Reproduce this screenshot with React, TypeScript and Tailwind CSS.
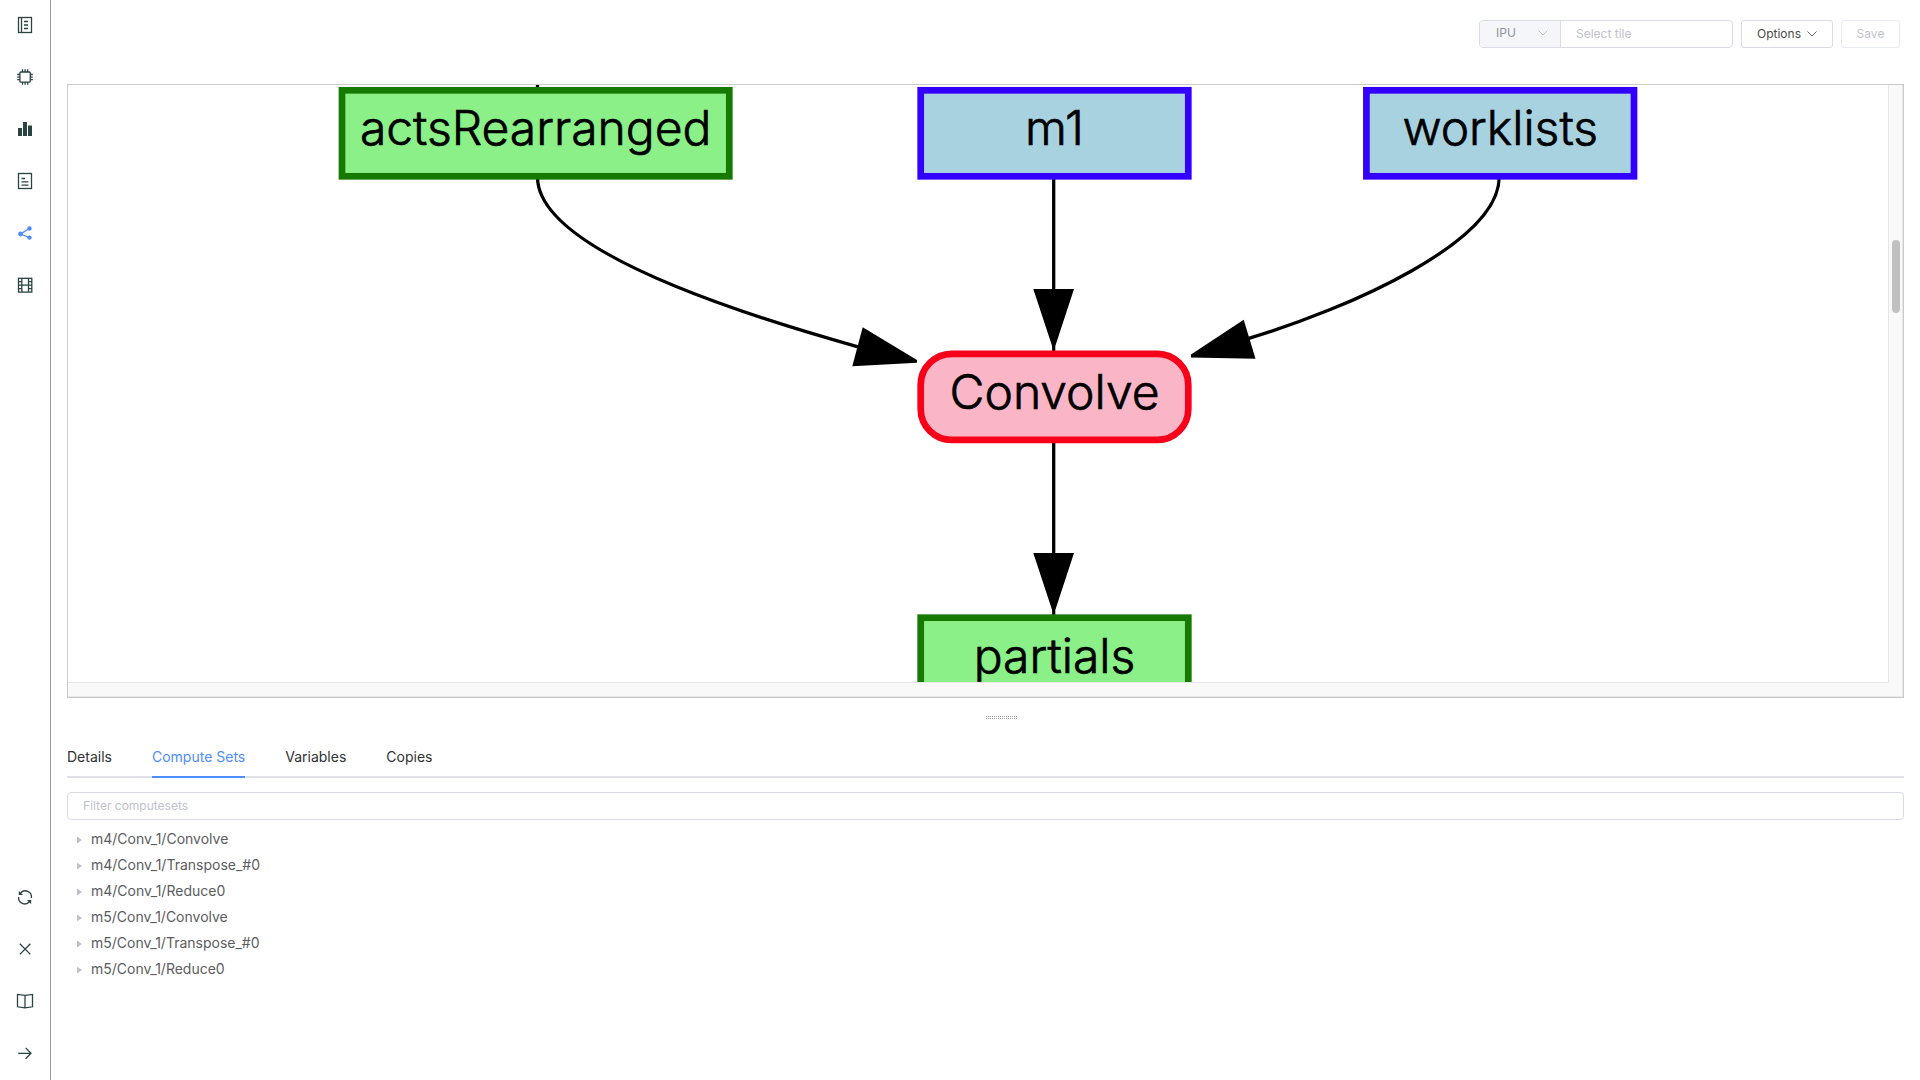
import type { ReactNode } from "react";

function Icon({ children }: { children: ReactNode }) {
  return (
    <svg
      width="20"
      height="20"
      viewBox="0 0 20 20"
      fill="none"
      stroke="currentColor"
      strokeWidth="1.3"
      aria-hidden="true"
    >
      {children}
    </svg>
  );
}

const topNav: { label: string; active?: boolean; icon: ReactNode }[] = [
  {
    label: "Summary",
    icon: (
      <Icon>
        <rect x="3.5" y="2.5" width="13" height="15" />
        <path d="M6.5 2.5v15M9 6.5h4M9 10h4M9 13.5h4" />
      </Icon>
    ),
  },
  {
    label: "Memory",
    icon: (
      <Icon>
        <rect x="4.9" y="5" width="10.4" height="10.2" rx="1" />
        <path d="M7.5 5V2.2M10.1 5V2.2M12.7 5V2.2M7.5 15v2.8M10.1 15v2.8M12.7 15v2.8M5 7.5H2.2M5 10.1H2.2M5 12.7H2.2M15 7.5h2.8M15 10.1h2.8M15 12.7h2.8" />
      </Icon>
    ),
  },
  {
    label: "Liveness",
    icon: (
      <Icon>
        <path d="M3 9h4v8H3zM8 3h4v14H8zM13 6.5h4V17h-4z" fill="currentColor" stroke="none" />
      </Icon>
    ),
  },
  {
    label: "Program tree",
    icon: (
      <Icon>
        <rect x="3.5" y="2.5" width="13" height="15" />
        <path d="M6.5 7.5H10M6.5 10.8h7M6.5 14.2h7" />
      </Icon>
    ),
  },
  {
    label: "Operations",
    active: true,
    icon: (
      <Icon>
        <path d="M14.5 5.5L5.5 11l9 3.7" />
        <circle cx="14.5" cy="5.5" r="2.2" fill="currentColor" stroke="none" />
        <circle cx="5.5" cy="11" r="2.4" fill="currentColor" stroke="none" />
        <circle cx="14.5" cy="14.6" r="2.2" fill="currentColor" stroke="none" />
      </Icon>
    ),
  },
  {
    label: "Execution trace",
    icon: (
      <Icon>
        <rect x="3.5" y="3.3" width="13.3" height="13.8" />
        <path d="M6.8 3v14M13.5 3v14M3.5 6.6h3.3M3.5 10.2h13.3M3.5 13.7h3.3M13.5 6.6h3.3M13.5 13.7h3.3" />
      </Icon>
    ),
  },
];

const bottomNav: { label: string; icon: ReactNode }[] = [
  {
    label: "Reload",
    icon: (
      <Icon>
        <path d="M5.6 6A6.2 6.2 0 0 1 16.4 11M14.4 14.8A6.2 6.2 0 0 1 3.6 10" />
        <path d="M3.8 3.9V8h4.3zM16.2 17.1V13h-4.3z" fill="currentColor" stroke="none" />
      </Icon>
    ),
  },
  {
    label: "Close",
    icon: (
      <Icon>
        <path d="M4.8 4.8l10.6 10.6M15.4 4.8L4.8 15.4" />
      </Icon>
    ),
  },
  {
    label: "Documentation",
    icon: (
      <Icon>
        <path d="M10 4.4L2.5 3.4v12.4l7.5 1 7.5-1V3.4zM10 4.4v12.4" />
      </Icon>
    ),
  },
  {
    label: "Expand",
    icon: (
      <Icon>
        <path d="M3.2 10.3h12.6M10.6 4.9l5.4 5.4-5.4 5.4" />
      </Icon>
    ),
  },
];

function NavButton({ label, icon, active }: { label: string; icon: ReactNode; active?: boolean }) {
  return (
    <button
      type="button"
      aria-label={label}
      className={`flex h-[52px] w-full items-center justify-center pb-[2px] ${active ? "text-[#4e8cff]" : "text-[#2a4441]"}`}
    >
      {icon}
    </button>
  );
}

function Chevron({ className }: { className: string }) {
  return (
    <svg width="10" height="6" viewBox="0 0 10 6" fill="none" stroke="currentColor" className={className} aria-hidden="true">
      <path d="M0.5 0.5L5 5l4.5-4.5" />
    </svg>
  );
}

interface GraphNode {
  label: string;
  x: number;
  y: number;
  width: number;
  radius?: number;
  fill: string;
  stroke: string;
}

const green = { fill: "#8bf088", stroke: "#167a00" };
const blue = { fill: "#a9d2e1", stroke: "#3300ff" };
const pink = { fill: "#fab6c6", stroke: "#f80019" };

const nodes: GraphNode[] = [
  { label: "actsRearranged", x: 342, y: 90.3, width: 387.3, ...green },
  { label: "m1", x: 920.7, y: 90.3, width: 267.6, ...blue },
  { label: "worklists", x: 1366.4, y: 90.3, width: 267.6, ...blue },
  { label: "Convolve", x: 920.7, y: 353.9, width: 267.6, radius: 31, ...pink },
  { label: "partials", x: 920.7, y: 617.7, width: 267.6, ...green },
];

function Graph() {
  return (
    <svg
      width="1820"
      height="597"
      viewBox="68 85 1820 597"
      className="block shrink-0"
      role="img"
      aria-label="Compute graph"
    >
      <g fill="none" stroke="#000" strokeWidth="3.3">
        <path d="M537.5 80v10" />
        <path d="M537.5 177C537.5 250 739 313.5 858 346.8" />
        <path d="M1053.7 177v113" />
        <path d="M1499.2 177C1499.2 242 1350 308 1248 338.6" />
        <path d="M1053.7 441v113" />
      </g>
      <g fill="#000">
        <path d="M862.7 327.3L852.3 366.3L917 362.8V360z" />
        <path d="M1033.3 289h40.7L1055.3 346v6h-3.2v-6z" />
        <path d="M1243.7 319.8L1255.5 358.7L1191 357.5V354.5z" />
        <path d="M1033.3 553h40.7L1055.3 610v6h-3.2v-6z" />
      </g>
      {nodes.map((n) => (
        <g key={n.label}>
          <rect
            x={n.x}
            y={n.y}
            width={n.width}
            height="86"
            rx={n.radius ?? 0}
            fill={n.fill}
            stroke={n.stroke}
            strokeWidth="6.7"
          />
          <text
            x={n.x + n.width / 2}
            y={n.y + 55}
            textAnchor="middle"
            stroke="#000"
            strokeWidth="0.7"
            className="fill-black text-[48px] font-light"
          >
            {n.label}
          </text>
        </g>
      ))}
    </svg>
  );
}

const tabs = ["Details", "Compute Sets", "Variables", "Copies"];

const computeSets = [
  "m4/Conv_1/Convolve",
  "m4/Conv_1/Transpose_#0",
  "m4/Conv_1/Reduce0",
  "m5/Conv_1/Convolve",
  "m5/Conv_1/Transpose_#0",
  "m5/Conv_1/Reduce0",
];

export default function App() {
  return (
    <div className="flex min-h-screen bg-white font-['Inter',sans-serif]">
      <nav className="flex w-[51px] shrink-0 flex-col justify-between border-r border-[#999999]">
        <div>
          {topNav.map((item) => (
            <NavButton key={item.label} {...item} />
          ))}
        </div>
        <div>
          {bottomNav.map((item) => (
            <NavButton key={item.label} {...item} />
          ))}
        </div>
      </nav>

      <main className="flex min-w-0 flex-1 flex-col px-4">
        <header className="flex h-[84px] items-start justify-end gap-2 pt-5 pr-1 text-xs">
          <div className="flex h-7 w-[254px] overflow-hidden rounded border border-[#d8dae4]">
            <div className="relative w-[81px] border-r border-[#d8dae4] bg-[#f5f6fa] text-[#909399]">
              <select
                aria-label="Target"
                className="block h-6 w-full appearance-none bg-transparent px-4 text-xs leading-6 outline-none"
              >
                <option>IPU</option>
              </select>
              <Chevron className="pointer-events-none absolute top-[9px] right-3 text-[#c0c4cc]" />
            </div>
            <input
              aria-label="Select tile"
              placeholder="Select tile"
              className="min-w-0 flex-1 px-[15px] outline-none placeholder:text-[#c0c2cc]"
            />
          </div>
          <button
            type="button"
            className="flex h-7 w-[92px] items-center justify-center gap-[6px] rounded-[3px] border border-[#d8dae4] text-[#4a4a4a]"
          >
            Options
            <Chevron className="text-[#606266]" />
          </button>
          <button type="button" className="h-7 w-[59px] rounded-[3px] border border-[#e8eaf2] text-[#c0c2cc]">
            Save
          </button>
        </header>

        <section className="border border-[#cacaca]">
          <div className="flex">
            <div className="min-w-0 flex-1 overflow-hidden">
              <Graph />
            </div>
            <div className="w-[15px] shrink-0 border-x border-[#e6e6e6] bg-[#f9f9f9] px-[3px] pt-[155px]">
              <div className="h-[73px] w-2 rounded-full bg-[#c0c0c0]" />
            </div>
          </div>
          <div className="flex h-[15px] border-b border-[#e6e6e6] bg-[#f9f9f9]">
            <div className="flex-1 border-t border-[#e6e6e6]" />
            <div className="w-[14px] border-r border-[#e6e6e6]" />
          </div>
        </section>

        <div className="flex h-[41px] pt-[18px] pl-[50%]">
          <svg width="32" height="3" viewBox="0 0 32 3" stroke="#999" strokeDasharray="1 1" aria-hidden="true">
            <path d="M0 0.5h32M0 2.5h32" />
          </svg>
        </div>

        <div role="tablist" className="flex gap-10 border-b-2 border-[#dfe0e8] text-sm">
          {tabs.map((tab) => (
            <button
              key={tab}
              type="button"
              role="tab"
              aria-selected={tab === "Compute Sets"}
              className={
                tab === "Compute Sets"
                  ? "-mb-[2px] h-[39px] border-b-2 border-[#4e8cff] pb-[2px] text-[#4e8cff]"
                  : "-mb-[2px] h-[39px] border-b-2 border-transparent pb-[2px] text-[#303133]"
              }
            >
              {tab}
            </button>
          ))}
        </div>

        <input
          aria-label="Filter computesets"
          placeholder="Filter computesets"
          className="mt-[14px] h-7 w-full rounded border border-[#d8dae4] px-[15px] pb-[2px] text-xs outline-none placeholder:text-[#c0c2cc]"
        />

        <ul role="tree" className="mt-[6px] text-sm text-[#5a5c60]">
          {computeSets.map((name) => (
            <li key={name} role="treeitem" className="flex h-[26px] items-center gap-[9px] pl-[10px]">
              <svg width="5" height="8" viewBox="0 0 5 8" fill="#bfc0cc" className="mt-[2px]" aria-hidden="true">
                <path d="M0 0.5L5 4L0 7.5z" />
              </svg>
              {name}
            </li>
          ))}
        </ul>
      </main>
    </div>
  );
}
